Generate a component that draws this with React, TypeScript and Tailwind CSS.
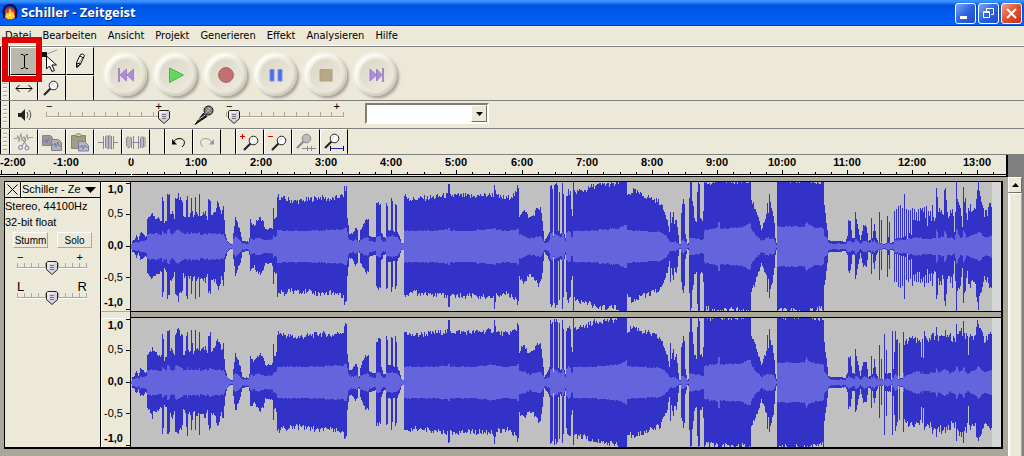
import { useState, type ReactNode } from "react";
import clsx from "clsx";

type Point = [x: number, peak: number, rms: number];

const MENU = ["Datei", "Bearbeiten", "Ansicht", "Projekt", "Generieren", "Effekt", "Analysieren", "Hilfe"];

// Envelope shared by both channels: [column, peak, rms]
const BODY: Point[] = [
  [0, 1, 1], [1, 5, 3], [3, 6, 3], [5, 11, 4], [7, 6, 3], [9, 13, 5], [12, 12, 5], [14, 9, 5], [15, 10, 6],
  [16, 27, 11], [19, 29, 12], [21, 34, 12], [22, 30, 12], [30, 25, 11], [31, 50, 15], [32, 44, 14], [33, 21, 12],
  [35, 25, 12], [36, 50, 16], [38, 49, 16], [39, 32, 12], [41, 34, 11], [43, 27, 12], [44, 47, 15], [46, 50, 16],
  [47, 54, 16], [48, 48, 15], [51, 44, 13], [52, 28, 12], [54, 30, 12], [55, 47, 12], [56, 51, 14], [57, 30, 12],
  [59, 31, 12], [60, 50, 13], [61, 37, 12], [62, 30, 12], [63, 30, 12], [64, 50, 13], [65, 34, 12], [67, 30, 12],
  [68, 51, 14], [69, 31, 11], [74, 34, 12], [76, 27, 11], [77, 45, 12], [79, 47, 13], [80, 32, 12], [84, 34, 12],
  [86, 42, 12], [88, 40, 12], [90, 31, 11], [92, 38, 12], [93, 24, 10], [94, 12, 7], [96, 5, 4], [99, 2, 1],
  [101, 2, 1], [102, 12, 7], [104, 28, 9], [107, 20, 7], [109, 15, 5], [111, 5, 2], [117, 4, 2], [118, 8, 4],
  [119, 25, 7], [123, 20, 6], [125, 24, 8], [129, 28, 8], [132, 24, 6], [134, 16, 6], [140, 17, 6], [141, 18, 7],
  [142, 36, 10], [143, 25, 8], [145, 28, 10], [146, 49, 15], [150, 47, 15], [164, 44, 15], [180, 46, 15],
  [188, 48, 15], [200, 46, 16], [212, 50, 16], [213, 56, 17], [215, 57, 18], [216, 28, 14], [217, 20, 8],
  [218, 12, 6], [221, 12, 5], [224, 18, 6], [226, 16, 5], [227, 5, 4], [228, 6, 3], [229, 15, 6], [234, 26, 8],
  [237, 26, 8], [238, 10, 5], [244, 8, 4], [245, 42, 9], [249, 41, 9], [250, 14, 6], [252, 8, 4], [254, 8, 4],
  [255, 44, 9], [256, 40, 9], [257, 16, 9], [259, 16, 9], [260, 45, 10], [261, 42, 10], [262, 15, 9], [263, 15, 9],
  [264, 43, 9], [265, 40, 9], [266, 14, 8], [268, 10, 6], [270, 3, 2], [272, 2, 2], [273, 50, 15], [280, 46, 15],
  [300, 48, 15], [316, 50, 16], [317, 60, 18], [318, 59, 18], [319, 50, 15], [340, 49, 15], [361, 51, 17],
  [362, 51, 17], [363, 60, 17], [364, 58, 17], [365, 49, 16], [375, 47, 15], [385, 52, 16], [386, 58, 18],
  [387, 57, 17], [388, 30, 11], [392, 36, 10], [398, 28, 7], [402, 30, 8], [406, 38, 9], [409, 37, 10],
  [411, 25, 7], [413, 5, 3], [415, 8, 3], [418, 14, 5], [419, 60, 12], [421, 59, 14], [422, 10, 9], [423, 60, 12],
  [426, 59, 11], [427, 14, 9], [428, 56, 10], [429, 12, 9], [430, 13, 9], [431, 61, 14], [432, 54, 12],
  [433, 12, 8], [434, 8, 5], [435, 28, 8], [436, 48, 13], [438, 54, 15], [440, 52, 14], [441, 35, 9],
  [442, 28, 9], [443, 64, 15], [444, 54, 15], [454, 55, 15], [462, 59, 15], [474, 61, 16], [484, 61, 17],
  [488, 63, 17], [489, 68, 18], [494, 68, 20], [496, 68, 21], [497, 50, 16], [503, 55, 15], [512, 50, 15],
  [521, 47, 14], [530, 43, 14], [533, 36, 12], [537, 26, 8], [539, 15, 5], [540, 36, 4], [541, 22, 4],
  [543, 34, 4], [544, 22, 4], [546, 27, 3], [548, 10, 2], [549, 2, 1], [550, 2, 1], [551, 35, 5], [553, 46, 6],
  [554, 42, 5], [555, 12, 4], [557, 2, 1], [558, 3, 1], [559, 48, 8], [560, 68, 8], [561, 62, 8], [562, 46, 8],
  [564, 28, 7], [566, 24, 7], [567, 56, 7], [568, 68, 8], [569, 62, 7], [570, 28, 6], [572, 25, 6], [573, 35, 6],
  [574, 68, 15], [576, 62, 16], [587, 64, 18], [588, 66, 24], [589, 66, 24], [590, 64, 17], [608, 63, 18],
  [612, 64, 18], [617, 65, 22], [620, 66, 22], [621, 46, 17], [624, 38, 12], [628, 27, 8], [631, 16, 5],
  [634, 25, 6], [636, 30, 8], [637, 44, 8], [638, 34, 8], [639, 50, 7], [641, 38, 7], [643, 30, 7], [644, 22, 5],
  [645, 8, 3], [646, 3, 1], [647, 68, 19], [650, 64, 19], [674, 65, 19], [676, 66, 24], [678, 65, 21],
  [685, 63, 18], [692, 62, 18], [693, 64, 17], [694, 40, 10], [696, 24, 8], [698, 6, 4], [700, 5, 2], [710, 5, 2],
  [715, 4, 2], [717, 9, 4], [718, 25, 5], [720, 24, 5], [722, 8, 3], [724, 8, 3], [725, 32, 6], [727, 22, 5],
  [730, 6, 2], [733, 20, 5], [736, 20, 5], [738, 5, 3], [740, 6, 3], [741, 26, 5], [742, 8, 4], [744, 22, 5],
  [746, 8, 3], [748, 3, 2], [749, 34, 3], [750, 3, 2], [751, 24, 3], [752, 3, 2], [753, 2, 1],
];

const LEFT_TAIL: Point[] = [
  [756, 3, 2], [757, 31, 3], [758, 8, 3], [759, 22, 3], [760, 3, 2], [763, 4, 2], [764, 6, 5], [780, 12, 7],
  [783, 27, 8], [800, 26, 7], [805, 28, 8], [806, 54, 15], [807, 50, 14], [808, 32, 8], [813, 33, 9], [814, 60, 15],
  [816, 48, 12], [817, 30, 8], [820, 30, 8], [822, 46, 8], [824, 14, 6], [825, 40, 10], [826, 58, 17], [828, 44, 12],
  [830, 34, 8], [832, 24, 8], [833, 56, 16], [835, 50, 12], [836, 28, 8], [840, 40, 10], [844, 36, 11],
  [847, 50, 13], [848, 66, 14], [850, 50, 13], [852, 36, 10], [857, 35, 8], [860, 44, 10], [862, 32, 10],
];

const RIGHT_TAIL: Point[] = [
  [754, 50, 2], [755, 8, 3], [756, 33, 3], [757, 8, 3], [760, 9, 2], [761, 2, 1], [762, 50, 5], [763, 14, 4],
  [765, 48, 8], [767, 40, 6], [768, 3, 2], [769, 38, 6], [770, 4, 3], [772, 4, 3], [773, 50, 8], [774, 38, 5],
  [780, 45, 8], [787, 44, 11], [790, 42, 9], [791, 21, 8], [792, 44, 9], [793, 21, 8], [794, 44, 8], [805, 46, 9],
  [806, 53, 14], [808, 42, 9], [814, 50, 13], [820, 44, 8], [825, 44, 12], [826, 54, 16], [829, 50, 10],
  [832, 50, 12], [833, 60, 15], [835, 46, 10], [837, 46, 8], [838, 22, 8], [839, 46, 9], [845, 46, 12],
  [848, 60, 16], [851, 48, 12], [855, 42, 9], [860, 48, 12], [862, 44, 11],
];

const LEFT_WAVE = [...BODY, ...LEFT_TAIL];
const RIGHT_WAVE = [...BODY, ...RIGHT_TAIL];

function noise(n: number) {
  const v = Math.sin(n * 12.9898) * 43758.5453;
  return v - Math.floor(v);
}

function wavePaths(points: Point[], seed: number, comb: boolean) {
  const mid = 64;
  let peakPath = "";
  let rmsPath = "";
  let i = 0;
  for (let x = 0; x <= 861; x++) {
    while (i < points.length - 2 && points[i + 1][0] <= x) i++;
    const [x0, p0, r0] = points[i];
    const [x1, p1, r1] = points[i + 1];
    const t = (x - x0) / (x1 - x0);
    let peak = p0 + (p1 - p0) * t;
    const rms = r0 + (r1 - r0) * t;
    // dense click pattern near the end of the left channel
    if (comb && x > 763 && x < 804 && x % 2 === 0) {
      peak = x === 774 ? 54 : 34 + noise(x) * 7;
    } else if (x > 776) {
      peak += (noise(x) - 0.5) * (comb ? 14 : 8);
    }
    const spread = Math.min(6, peak * 0.14);
    const up = Math.round(Math.min(64, peak + (noise(x + seed) - 0.4) * spread));
    const down = Math.round(Math.min(64, peak + (noise(x + seed + 999) - 0.6) * spread));
    const inner = Math.round(rms + (noise(x + seed + 444) > 0.75 ? 1 : 0));
    peakPath += `M${x} ${mid - up}h1V${mid + 1 + down}h-1z`;
    rmsPath += `M${x} ${mid - inner}h1V${mid + 1 + inner}h-1z`;
  }
  return { peakPath, rmsPath };
}

function Waveform({ points, seed, comb = false, label }: { points: Point[]; seed: number; comb?: boolean; label: string }) {
  const { peakPath, rmsPath } = wavePaths(points, seed, comb);
  return (
    <svg
      role="img"
      aria-label={label}
      viewBox="0 0 871 129"
      preserveAspectRatio="none"
      shapeRendering="crispEdges"
      className="block h-[129px] w-full bg-[#c0c0c0]"
    >
      <path d="M862 0h9v129h-9z" fill="#d6d6d6" />
      <path d={peakPath} fill="#3232c8" />
      <path d={rmsPath} fill="#6464dc" />
    </svg>
  );
}

function LevelRuler() {
  return (
    <div className="relative grid h-[129px] grid-rows-[12px_36px_28px_36px_14px] items-center border-t border-l border-white pr-[7px] text-right text-[11px] leading-3">
      <b>1,0</b>
      <span>0,5</span>
      <b>0,0</b>
      <span>-0,5</span>
      <b>-1,0</b>
      <svg className="absolute top-0 right-0 h-[129px] w-1" shapeRendering="crispEdges" aria-hidden="true">
        <path d="M0 .5h4M0 31.5h4M0 63.5h4M0 94.5h4M0 126.5h4" stroke="#000" />
      </svg>
    </div>
  );
}

function TimeRuler() {
  const minutes = Array.from({ length: 16 }, (_, i) => i);
  return (
    <div className="flex h-[22px] bg-[#808080]">
      <div className="flex-1 border-r-2 border-b border-black bg-[#ece9d8]">
        <svg className="block h-[21px] w-full" aria-label="Zeitachse">
          {minutes.map((i) => {
            const x = Math.round(1 + i * 65.07);
            const minute = i - 2;
            return (
              <g key={i} shapeRendering="crispEdges">
                <path d={`M${x + 0.5} 15v5M${x + 16.5} 17v3M${x + 33.5} 17v3M${x + 49.5} 17v3`} stroke="#000" />
                <text
                  x={i === 0 ? 0 : x}
                  y="11"
                  textAnchor={i === 0 ? "start" : "middle"}
                  className="text-[11px] font-bold"
                >
                  {minute === 0 ? "0" : `${minute}:00`}
                </text>
              </g>
            );
          })}
          <path d="M0 19.5h1900" stroke="#000" shapeRendering="crispEdges" />
          <path d="M131.5 0v5M131.5 11v10" stroke="#fff" shapeRendering="crispEdges" />
        </svg>
      </div>
      <div className="w-4" />
    </div>
  );
}

function Grip() {
  return (
    <div className="flex w-[10px] justify-center border-x border-black py-1">
      <div className="w-1 bg-[repeating-linear-gradient(to_bottom,#aca899_0_1px,#fff_1px_2px,transparent_2px_4px)]" />
    </div>
  );
}

function ToolButton({ label, active, disabled, className, children }: {
  label: string;
  active?: boolean;
  disabled?: boolean;
  className?: string;
  children?: ReactNode;
}) {
  return (
    <button
      type="button"
      aria-label={label}
      disabled={disabled}
      className={clsx(
        "flex w-7 items-center justify-center border-t border-r border-l border-t-white border-r-black border-l-white",
        active && "bg-[#bab7ab]",
        className,
      )}
    >
      {children}
    </button>
  );
}

function Icon({ children, size = 20 }: { children: ReactNode; size?: number }) {
  return (
    <svg width={size} height={size} viewBox={`0 0 ${size} ${size}`} fill="none" stroke="#000" aria-hidden="true">
      {children}
    </svg>
  );
}

function Lens({ fill = "#fff", stroke = "#222", x = 0, y = 0 }: { fill?: string; stroke?: string; x?: number; y?: number }) {
  return (
    <g transform={`translate(${x} ${y})`}>
      <path d="M8.5 9.5L2 16" stroke={stroke} strokeWidth="2.2" />
      <circle cx="11.5" cy="6.5" r="4.3" fill={fill} stroke={stroke} />
      <path d="M9.5 6.5q.3-1.8 2-2" stroke="#b8c4cc" />
    </g>
  );
}

function TransportButton({ label, children }: { label: string; children: ReactNode }) {
  return (
    <div className="flex w-[50px] items-center justify-center">
      <button
        type="button"
        aria-label={label}
        className="flex size-[42px] items-center justify-center rounded-full bg-[#ebe8db] shadow-[2px_2px_3px_#a19e90,-1px_-1px_3px_#fffffa,inset_2px_2px_3px_#fffffa,inset_-2px_-2px_3px_#c9c6b8]"
      >
        <span className="flex size-8 items-center justify-center rounded-full bg-linear-to-br from-[#d9d6c7] to-[#efecdf]">
          <svg width="18" height="16" viewBox="0 0 18 16" aria-hidden="true">{children}</svg>
        </span>
      </button>
    </div>
  );
}

function Slider({ label, initial, ticks, low, high, letters, className }: {
  label: string;
  initial: number;
  ticks: number;
  low: string;
  high: string;
  letters?: boolean;
  className: string;
}) {
  const [value, setValue] = useState(initial);
  return (
    <div className={clsx("relative h-[23px]", className)}>
      <div className={clsx("flex justify-between leading-[10px]", letters ? "text-[13px]" : "pr-1 text-[11px]")}>
        <span>{low}</span>
        <span>{high}</span>
      </div>
      <div className="mt-px flex h-1 justify-between">
        {Array.from({ length: ticks }, (_, i) => (
          <span key={i} className="w-px bg-[#aca899]" />
        ))}
      </div>
      <div className="h-[2px] border-t border-[#aca899] bg-white" />
      <div
        className="pointer-events-none absolute inset-y-0 flex w-0 justify-center"
        style={{ left: `${value}%` }}
      >
        <svg width="12" height="14" viewBox="0 0 12 14" className="mt-[9px] shrink-0" aria-hidden="true">
          <path d="M1.5.5h9l1 1v7L6 13.5.5 8.500v-7z" fill="#d5d3e0" stroke="#222" />
          <path d="M2 2h6M2 2v6" stroke="#fff" />
          <path d="M4 4.500h4M4 6.500h4M4 8.500h4" stroke="#777" />
        </svg>
      </div>
      <input
        type="range"
        aria-label={label}
        value={value}
        onChange={(e) => setValue(Number(e.target.value))}
        className="absolute inset-0 w-full opacity-0"
      />
    </div>
  );
}

function WindowButton({ label, close, children }: { label: string; close?: boolean; children: ReactNode }) {
  return (
    <button
      type="button"
      aria-label={label}
      className={clsx(
        "flex size-[21px] items-center justify-center rounded-[3px] border border-white bg-linear-to-br",
        close ? "from-[#f09a80] via-[#e05030] to-[#c83010]" : "from-[#7ea4f4] via-[#2e62e0] to-[#1c4cc8]",
      )}
    >
      <svg width="15" height="15" viewBox="0 0 15 15" fill="none" stroke="#fff" aria-hidden="true">{children}</svg>
    </button>
  );
}

function TitleBar() {
  return (
    <header className="flex h-[26px] items-center justify-between bg-linear-to-b from-[#3a92ff] from-5% via-[#0054e3] via-20% to-[#0062fa] pr-[2px] pl-[2px] shadow-[inset_0_-1px_0_#0040c0]">
      <div className="flex items-center gap-[3px]">
        <svg width="16" height="18" viewBox="0 0 16 18" aria-hidden="true">
          <path d="M2 10C1 4 4 1 8 1s7 3 6 9" fill="none" stroke="#10104c" strokeWidth="2.5" />
          <circle cx="8" cy="10" r="6" fill="#e8301c" />
          <path d="M3 13l2-5 1 2 2-6 2 5 1-2 2 6-3 2H6z" fill="#ffd22c" />
          <path d="M7 12l1-4 1 4z" fill="#fff" />
          <path d="M1 8h2v6H1zM13 8h2v6h-2z" fill="#10104c" />
        </svg>
        <h1 className="font-['Open_Sans'] text-[13px] font-bold text-white [text-shadow:1px_1px_0_#0a2a7a]">
          Schiller - Zeitgeist
        </h1>
      </div>
      <div className="flex gap-[2px]">
        <WindowButton label="Minimieren">
          <path d="M2 11.500h7" strokeWidth="3" />
        </WindowButton>
        <WindowButton label="Wiederherstellen">
          <path d="M5.500 5V2.500h7v6H10M5 2.500h8" />
          <path d="M2.500 5.500h6v6h-6zM2 6.500h7" />
        </WindowButton>
        <WindowButton label="Schließen" close>
          <path d="M3 3l9 9M12 3l-9 9" strokeWidth="2" />
        </WindowButton>
      </div>
    </header>
  );
}

function ControlToolbar() {
  return (
    <div className="flex h-[54px] border-b border-[#808080]">
      <Grip />
      <div className="relative grid grid-cols-3 grid-rows-[28px_25px]">
        <ToolButton label="Auswahlwerkzeug" active className="border-b border-b-black">
          <Icon><path d="M7 3.500h2l1.500 1.500L12 3.500h2M10.500 5v11M7 17.500h2l1.500-1.500 1.500 1.500h2" /></Icon>
        </ToolButton>
        <ToolButton label="Hüllkurvenwerkzeug" className="border-b border-b-black">
          <Icon size={24}>
            <path d="M1 3h6v5H1z" fill="#111" stroke="none" />
            <path d="M7 5l10-4" stroke="#999" />
            <path d="M6.500 7v13l3-3 2.500 5.500 2.500-1-2.500-5.500h4.500z" fill="#fff" />
          </Icon>
        </ToolButton>
        <ToolButton label="Zeichenwerkzeug" className="border-b border-b-black">
          <Icon>
            <path d="M6.500 11.500L10.500 3.500q2-1.500 4 1L10.500 13 6.500 16z" fill="#fff" />
            <path d="M7 12l3.500 1L7 16.500zM10 5l3.500 2" />
            <path d="M12 7l-3 5" stroke="#999" />
          </Icon>
        </ToolButton>
        <ToolButton label="Verschiebewerkzeug">
          <Icon><path d="M2 10.500h16M5.500 7L2 10.500 5.500 14M14.500 7l3.500 3.500-3.500 3.500" /></Icon>
        </ToolButton>
        <ToolButton label="Zoomwerkzeug">
          <Icon><Lens y={1} /></Icon>
        </ToolButton>
        <div className="w-7 border-t border-r border-t-white border-r-black" />
        {/* highlight around the selection tool */}
        <div className="pointer-events-none absolute -top-[10px] -left-2 h-[45px] w-10 border-[6px] border-[#e00000]" />
      </div>
      <div className="ml-[7px] flex pt-[2px]">
        <TransportButton label="Zum Anfang">
          <path d="M2 1v14" stroke="#9468c4" strokeWidth="1.500" />
          <path d="M9.500 2v12L3 8zM16.500 2v12L10 8z" fill="#b08cdc" stroke="#8c6cb8" strokeWidth=".7" />
        </TransportButton>
        <TransportButton label="Wiedergabe">
          <path d="M2.500 1v14.500L16.500 8z" fill="#62d862" stroke="#4cb04c" />
        </TransportButton>
        <TransportButton label="Aufnahme">
          <circle cx="9" cy="8" r="7.400" fill="#c47070" stroke="#a46464" />
        </TransportButton>
        <TransportButton label="Pause">
          <path d="M3 2.500h4v11.500H3zM11 2.500h4v11.500h-4z" fill="#4470f0" stroke="#7890dc" />
        </TransportButton>
        <TransportButton label="Stopp">
          <path d="M3 2.500h12v11.500H3z" fill="#b8a888" stroke="#b0a080" />
        </TransportButton>
        <TransportButton label="Zum Ende">
          <path d="M16 1v14" stroke="#9468c4" strokeWidth="1.500" />
          <path d="M3 2v12l6.500-6zM9.500 2v12L15 8z" fill="#b08cdc" stroke="#8c6cb8" strokeWidth=".7" />
        </TransportButton>
      </div>
    </div>
  );
}

function MixerToolbar() {
  return (
    <div className="flex h-7 border-b border-[#808080]">
      <Grip />
      <div className="flex pl-1">
        <span className="mr-3 flex items-center">
          <Icon>
            <path d="M4 8h3l4-4v12l-4-4H4z" fill="#222" stroke="none" />
            <path d="M13 7q2 3 0 6M15 5q3.500 5 0 10" stroke="#555" />
          </Icon>
        </span>
        <Slider label="Ausgabelautstärke" initial={98} ticks={11} low="−" high="+" className="w-[120px]" />
        <span className="mr-3 ml-7 flex items-center">
          <svg width="20" height="20" viewBox="0 0 20 20" aria-hidden="true">
            <path d="M1 19.500L9.500 8l3.500 3.500z" fill="#222" stroke="#111" />
            <path d="M4 15l7-5" stroke="#ccc" />
            <circle cx="14.500" cy="5.500" r="4.500" fill="#777" stroke="#111" />
            <path d="M12 4l5 4M13.500 2l4 4M16.500 2.500l-5 6" stroke="#ccc" strokeWidth=".8" />
          </svg>
        </span>
        <Slider label="Eingabelautstärke" initial={7} ticks={11} low="−" high="+" className="w-[118px]" />
        <div className="relative mt-[2px] ml-[21px] h-[21px] w-[124px]">
          <select
            aria-label="Eingangsquelle"
            className="block size-full appearance-none border-2 border-t-[#808070] border-r-white border-b-white border-l-[#808070] bg-white text-[11px]"
          >
            <option></option>
          </select>
          <span className="pointer-events-none absolute top-[2px] right-[2px] flex h-[17px] w-4 items-center justify-center border border-t-white border-r-[#716f64] border-b-[#716f64] border-l-white bg-[#ece9d8]">
            <svg width="7" height="4" aria-hidden="true"><path d="M0 0h7L3.500 4z" /></svg>
          </span>
        </div>
      </div>
    </div>
  );
}

function EditToolbar() {
  return (
    <div className="flex h-[26px] border-b border-[#808080]">
      <Grip />
      <ToolButton label="Ausschneiden" disabled>
        <Icon>
          <path d="M0 6.500h3l1-3 1 6 2-8 1 7 2-4 1 4 2-6 1 5 1-2h4" stroke="#999" />
          <path d="M12 8l-4 6M9 8l4 6" stroke="#8080a8" />
          <circle cx="6.500" cy="15.500" r="2" stroke="#7878b8" />
          <circle cx="13" cy="16" r="2" stroke="#7878b8" />
        </Icon>
      </ToolButton>
      <ToolButton label="Kopieren" disabled>
        <Icon>
          <path d="M.5 3.500h8l2 2v8H.5z" fill="#999" stroke="#888" />
          <path d="M9.500 7.500h7l3 3v8h-10z" fill="#b0b0b0" stroke="#7c7cac" />
          <path d="M1 9h2l1-2 1 4 2-5M10 13h2l1-2 1 4 2-5 1 4h2" stroke="#7878b0" />
        </Icon>
      </ToolButton>
      <ToolButton label="Einfügen" disabled>
        <Icon>
          <path d="M1.500 3.500h14v13h-14z" fill="#a09c88" stroke="#88846c" />
          <path d="M5.500 4.500q0-3 3-3t3 3z" fill="#d0ccb0" stroke="#88846c" />
          <path d="M8.500 9.500h6l4 4v5.500h-10z" fill="#b8b8c0" stroke="#7c7cac" />
          <path d="M9 15h2l1-2 1 4 2-4 1 2h2" stroke="#7878b0" />
        </Icon>
      </ToolButton>
      <ToolButton label="Außerhalb der Auswahl löschen" disabled>
        <Icon><path d="M0 10.500h5M5.500 4v13M7.500 16V5l1.500-1.500V16l1.500 1V4l1.500-.5V16l1.500 1V4M15.500 4v13M15 10.500h5" stroke="#85859c" /></Icon>
      </ToolButton>
      <ToolButton label="Auswahl in Stille umwandeln" disabled>
        <Icon><path d="M.5 14V6L2 4.500V16l2-1V5l1.500 1v10M6.500 10.500h7M7.500 4v13M12.500 4v13M14.500 16V6L16 4.500V16l1.500-1V5l1.500 1v9" stroke="#85859c" /></Icon>
      </ToolButton>
      <div className="w-[15px] border-r border-black" />
      <ToolButton label="Rückgängig">
        <Icon>
          <path d="M4 10.500q2-4 6-4 5 0 5.500 4 0 2.500-2.500 4.500" />
          <path d="M3 7v5.500h5z" fill="#000" stroke="none" />
        </Icon>
      </ToolButton>
      <ToolButton label="Wiederholen" disabled>
        <Icon>
          <path d="M15 10.500q-2-4-6-4-5 0-5.500 4 0 2.500 2.500 4.500" stroke="#999" />
          <path d="M17 7v5.500h-5z" fill="#999" stroke="none" />
        </Icon>
      </ToolButton>
      <div className="w-[15px] border-r border-black" />
      <ToolButton label="Vergrößern">
        <Icon>
          <Lens x={2} y={2} />
          <path d="M0 4.500h5M2.500 2v5" stroke="#e00000" />
        </Icon>
      </ToolButton>
      <ToolButton label="Verkleinern">
        <Icon>
          <Lens x={2} y={2} />
          <path d="M0 4.500h5" stroke="#e00000" />
        </Icon>
      </ToolButton>
      <ToolButton label="Auswahl einpassen" disabled>
        <Icon>
          <Lens x={-1} fill="#bbb" stroke="#888" />
          <path d="M6 16.500h14M11.500 14v5M15.500 14v5" stroke="#85859c" />
        </Icon>
      </ToolButton>
      <ToolButton label="Projekt einpassen">
        <Icon>
          <Lens x={-1} />
          <path d="M6 16.500h13" stroke="#2828c0" />
          <path d="M6.500 14v5M19.500 14v5" />
        </Icon>
      </ToolButton>
    </div>
  );
}

function TrackPanel() {
  const push =
    "flex h-4 w-[35px] items-center justify-center border border-t-white border-r-[#aca899] border-b-[#aca899] border-l-white text-[10px]";
  return (
    <section className="w-24 border-r border-black" aria-label="Spur">
      <div className="flex h-4 border-b border-black">
        <button type="button" aria-label="Spur schließen" className="flex w-4 items-center justify-center border-r border-black">
          <svg width="11" height="11" stroke="#000" aria-hidden="true"><path d="M.5.5l10 10M10.500.5l-10 10" /></svg>
        </button>
        <button type="button" className="flex flex-1 items-center justify-between border-l border-white pr-1 text-[11px]">
          Schiller - Ze
          <svg width="11" height="6" aria-hidden="true"><path d="M0 0h11L5.500 6z" /></svg>
        </button>
      </div>
      <p className="text-[11px] leading-4 whitespace-nowrap">
        Stereo, 44100Hz
        <br />
        32-bit float
      </p>
      <div className="mt-[2px] flex gap-[9px] pl-2">
        <button type="button" className={push}>Stumm</button>
        <button type="button" className={push}>Solo</button>
      </div>
      <Slider label="Verstärkung" initial={50} ticks={11} low="−" high="+" className="mt-1 ml-3 w-[70px]" />
      <Slider label="Panorama" initial={50} ticks={11} low="L" high="R" letters className="mt-[7px] ml-3 w-[70px]" />
    </section>
  );
}

export default function App() {
  return (
    <div className="flex min-h-screen flex-col bg-[#ece9d8] font-['Liberation_Sans',Arial,sans-serif] text-black">
      <TitleBar />
      <nav className="flex h-[21px] items-center gap-[11px] border-b border-[#808080] pl-[5px] font-['DejaVu_Sans_Condensed','DejaVu_Sans',sans-serif] text-[11px] shadow-[inset_0_-1px_0_#fff]">
        {MENU.map((item) => (
          <button key={item} type="button">{item}</button>
        ))}
      </nav>
      <ControlToolbar />
      <MixerToolbar />
      <EditToolbar />
      <TimeRuler />
      <main className="flex flex-1 bg-[#aca899]">
        <div className="flex-1 pt-1 pr-[5px] pb-[7px] pl-1">
          <div className="flex border-t border-r-2 border-b-2 border-l border-black bg-[#ece9d8]">
            <TrackPanel />
            <div className="w-[29px]">
              <LevelRuler />
              <div className="h-[7px] border-t border-[#aca899]" />
              <LevelRuler />
            </div>
            <div className="min-w-0 flex-1 border-l border-black">
              <Waveform points={LEFT_WAVE} seed={3} comb label="Linker Kanal" />
              <div className="h-[7px] border-y border-black bg-[#aca899]" />
              <Waveform points={RIGHT_WAVE} seed={71} label="Rechter Kanal" />
            </div>
          </div>
        </div>
        <div className="flex w-4 flex-col border-r-2 border-[#808080]">
          <button
            type="button"
            aria-label="Nach oben"
            className="flex h-4 items-center justify-center border border-t-white border-r-[#716f64] border-b-[#716f64] border-l-white bg-[#ece9d8]"
          >
            <svg width="7" height="4" aria-hidden="true"><path d="M0 4h7L3.500 0z" /></svg>
          </button>
          <div className="flex-1 border-t border-r border-l-2 border-t-white border-r-[#aca899] border-l-white bg-[#ece9d8]" />
        </div>
      </main>
    </div>
  );
}
